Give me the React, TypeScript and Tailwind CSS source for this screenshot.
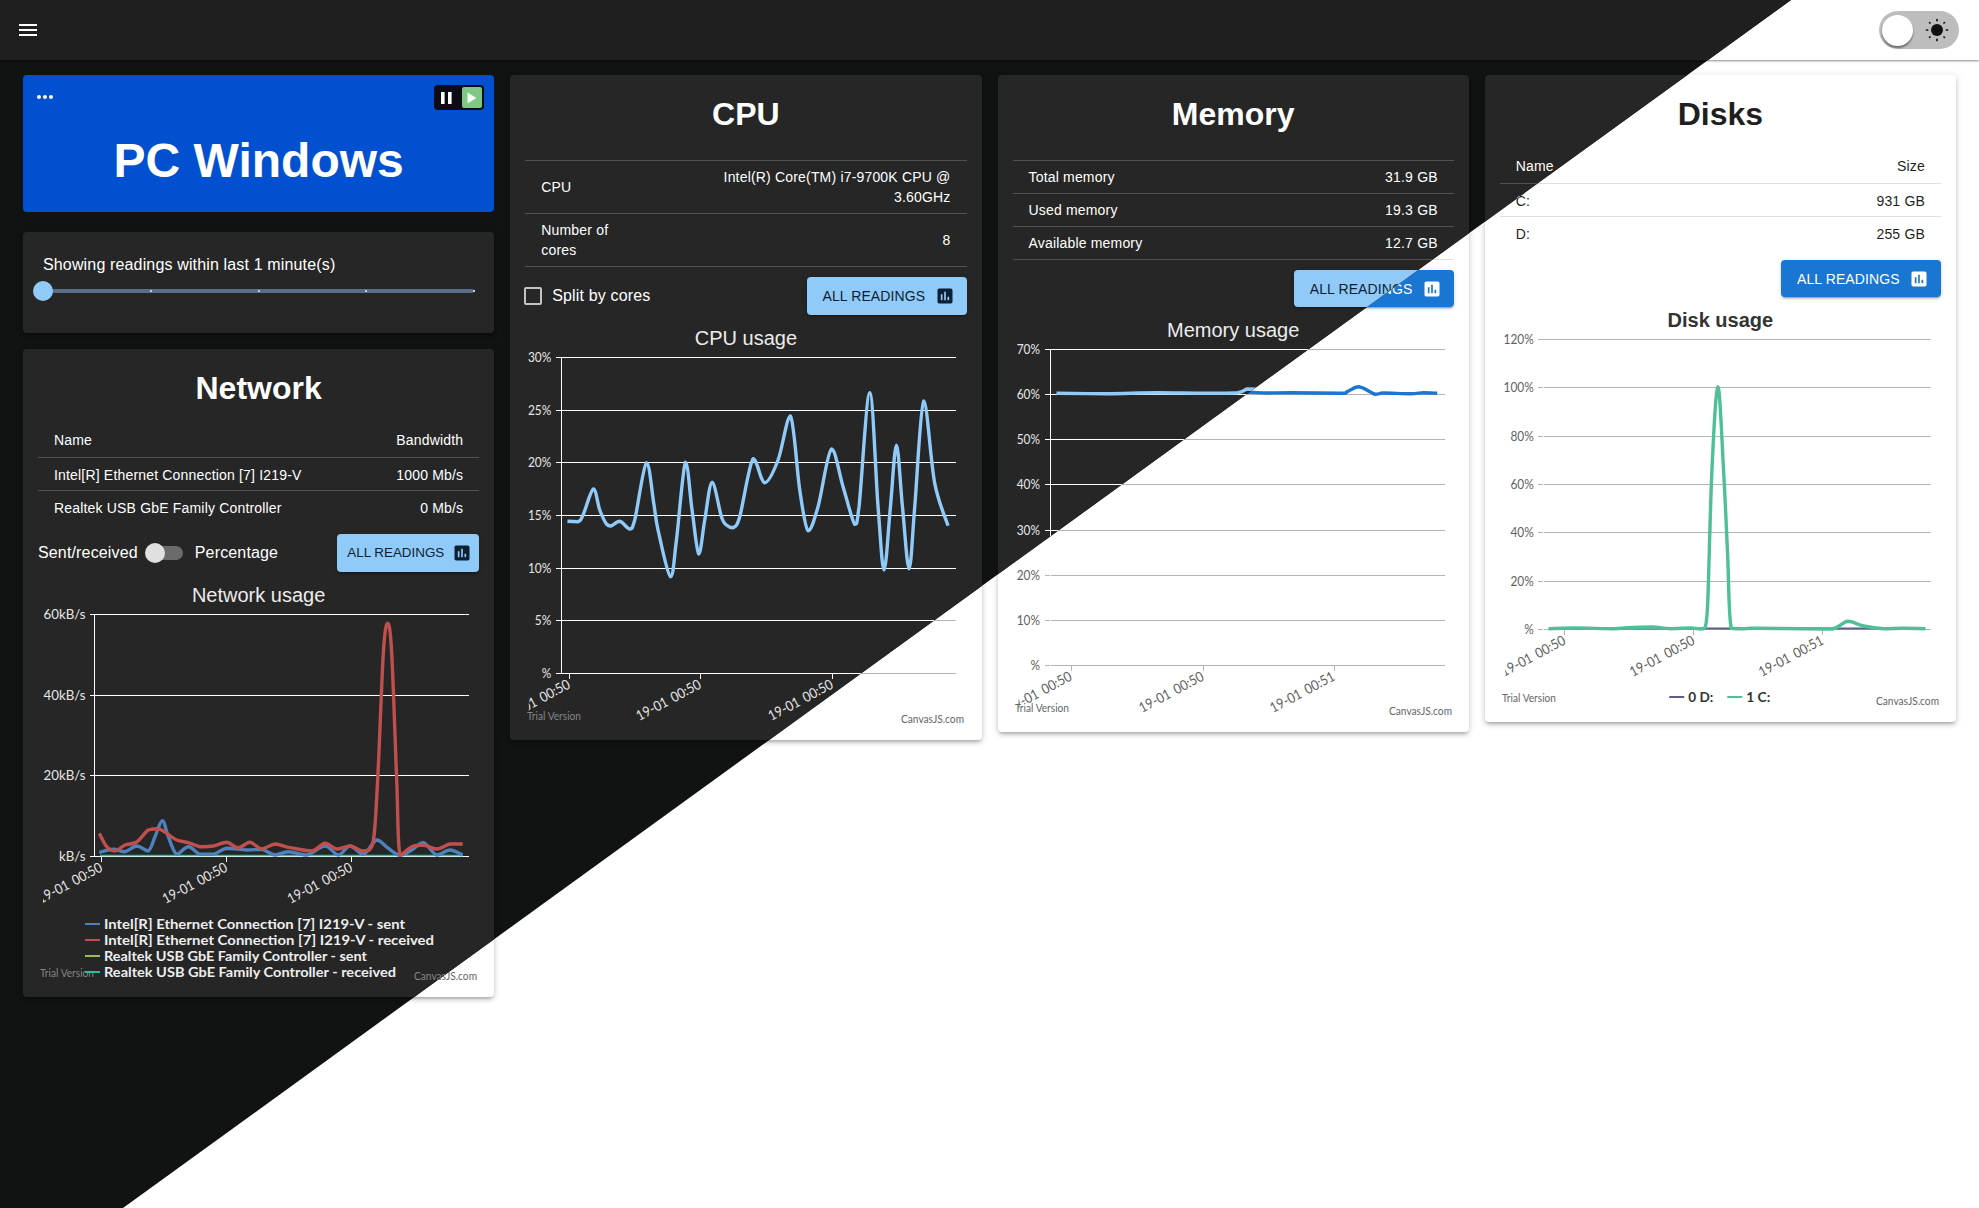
import React from "react";

type Mode = "dark" | "light";
type Pt = [number, number];

const themes = {
  dark: {
    page: "bg-[#111212]",
    bar: "bg-[#1f1f1f]",
    card: "bg-[#262626] text-white",
    line: "border-[#515151]",
    chartTitle: "text-[#ececec] font-normal",
    button: "bg-[#90caf9] text-[#0c1f33]",
    icon: "#0c1f33",
    rail: "bg-[#566e87]",
    thumb: "bg-[#90caf9]",
    tick: "bg-[#b7cde0]",
    track: "bg-[#6b6b6b]",
    knob: "bg-[#e0e0e0]",
    box: "border-[#c4c4c4]",
    menu: "#ffffff",
    grid: "#ffffff",
    axis: "#ffffff",
    label: "#e6e6e6",
    mark: "#858585",
    legend: "#eeeeee",
  },
  light: {
    page: "bg-white",
    bar: "bg-white",
    card: "bg-white text-[#1f1f1f]",
    line: "border-[#e0e0e0]",
    chartTitle: "text-[#333333] font-bold",
    button: "bg-[#1976d2] text-white",
    icon: "#ffffff",
    rail: "bg-[#a3c8ed]",
    thumb: "bg-[#1976d2]",
    tick: "bg-[#ffffff]",
    track: "bg-[#b0b0b0]",
    knob: "bg-[#ffffff]",
    box: "border-[#757575]",
    menu: "#333333",
    grid: "#b4b4b4",
    axis: "#ffffff",
    label: "#5f5f5f",
    mark: "#666666",
    legend: "#333333",
  },
};

function zoomed(ox: number, oy: number, pts: Pt[]): Pt[] {
  return pts.map(([x, y]) => [ox + x / 3, oy + y / 3]);
}

function clamp(v: number, a: number, b: number) {
  return Math.min(Math.max(a, b), Math.max(Math.min(a, b), v));
}

function spline(pts: Pt[]): string {
  let d = `M${pts[0][0].toFixed(1)} ${pts[0][1].toFixed(1)}`;
  for (let i = 0; i < pts.length - 1; i++) {
    const p0 = pts[Math.max(0, i - 1)];
    const p1 = pts[i];
    const p2 = pts[i + 1];
    const p3 = pts[Math.min(pts.length - 1, i + 2)];
    const c1x = p1[0] + (p2[0] - p0[0]) / 6;
    const c1y = clamp(p1[1] + (p2[1] - p0[1]) / 6, p1[1], p2[1]);
    const c2x = p2[0] - (p3[0] - p1[0]) / 6;
    const c2y = clamp(p2[1] - (p3[1] - p1[1]) / 6, p1[1], p2[1]);
    d += `C${c1x.toFixed(1)} ${c1y.toFixed(1)} ${c2x.toFixed(1)} ${c2y.toFixed(1)} ${p2[0].toFixed(1)} ${p2[1].toFixed(1)}`;
  }
  return d;
}

const networkRed = zoomed(0, 620, [
  [298, 640], [320, 680], [345, 693], [375, 675], [410, 666], [445, 630], [475, 626], [500, 640], [530, 660], [565, 668],
  [600, 680], [640, 678], [680, 667], [715, 683], [750, 667], [785, 687], [825, 672], [870, 683], [935, 693], [975, 670],
  [1010, 687], [1050, 678], [1085, 693], [1108, 690], [1123, 640], [1135, 440], [1150, 100], [1163, 10], [1175, 100], [1190, 480],
  [1200, 706], [1235, 680], [1270, 675], [1310, 687], [1350, 672], [1388, 672],
]);
const networkBlue = zoomed(0, 620, [
  [298, 697], [340, 688], [375, 695], [410, 678], [445, 693], [465, 650], [487, 602], [505, 650], [530, 703], [565, 680],
  [600, 703], [640, 703], [680, 685], [740, 690], [785, 688], [825, 705], [865, 695], [920, 705], [975, 678], [1015, 705],
  [1050, 678], [1090, 703], [1130, 660], [1165, 685], [1200, 706], [1235, 690], [1270, 668], [1310, 705], [1350, 690], [1388, 705],
]);
const cpuLine = zoomed(500, 340, [
  [203, 544], [235, 545], [250, 525], [281, 447], [300, 510], [320, 552], [333, 558], [360, 544], [390, 567], [405, 540],
  [440, 368], [462, 490], [475, 570], [512, 710], [530, 600], [557, 367], [577, 510], [597, 642], [615, 540], [637, 427],
  [665, 530], [680, 555], [700, 563], [720, 530], [760, 356], [795, 428], [835, 360], [872, 228], [900, 450], [925, 572],
  [955, 500], [995, 327], [1030, 440], [1065, 553], [1078, 500], [1110, 158], [1135, 500], [1153, 690], [1172, 500], [1190, 316],
  [1208, 500], [1228, 686], [1245, 500], [1272, 183], [1305, 430], [1345, 557],
]);
const memoryTail: Pt[] = [
  [830, 189], [900, 188], [1050, 190], [1070, 185], [1105, 170], [1155, 193], [1180, 189], [1260, 191], [1300, 188], [1340, 190],
];
const memoryDark = zoomed(990, 330, [
  [198, 190], [350, 191], [500, 188], [640, 190], [740, 188], [770, 177], [800, 178], ...memoryTail,
]);
const memoryLight = zoomed(990, 330, [
  [198, 190], [350, 191], [500, 188], [640, 190], [740, 188], [780, 187], ...memoryTail,
]);
const diskLine = zoomed(1470, 320, [
  [235, 926], [310, 924], [430, 926], [470, 923], [545, 921], [600, 926], [660, 924], [690, 927], [703, 925], [712, 860],
  [725, 450], [743, 200], [760, 450], [772, 700], [783, 925], [820, 926], [850, 925], [1000, 926], [1085, 927], [1133, 904],
  [1180, 918], [1240, 926], [1300, 925], [1365, 926],
]);

type Series = { d: string; color: string; width?: number };
type LegendItem = { label: string; color: string; x: number; y: number; len: number };

type ChartProps = {
  mode: Mode;
  ox: number;
  oy: number;
  gridStart: number;
  gridEnd: number;
  axisX: number;
  rows: { y: number; label: string }[];
  ticks: { x: number; label: string }[];
  clipX: number;
  series: Series[];
  legend?: LegendItem[];
  clipId: string;
  labelScale?: number;
};

const canvasFont = "Lato, 'Open Sans', sans-serif";

function Chart({ mode, ox, oy, gridStart, gridEnd, axisX, rows, ticks, clipX, series, legend, clipId, labelScale = 0.85 }: ChartProps) {
  const t = themes[mode];
  const bottom = rows[rows.length - 1].y;
  const id = `${clipId}-${mode}`;
  return (
    <svg viewBox={`${ox} ${oy} 471.25 390`} className="block w-full h-[390px]">
      <defs>
        <clipPath id={id}>
          <rect x={clipX} y={oy} width={471} height={390} />
        </clipPath>
      </defs>
      {rows.map((r) => (
        <line key={r.y} x1={gridStart} x2={gridEnd} y1={r.y} y2={r.y} stroke={t.grid} strokeWidth={1} shapeRendering="crispEdges" />
      ))}
      <line x1={axisX} x2={axisX} y1={rows[0].y} y2={bottom} stroke={t.axis} strokeWidth={1} shapeRendering="crispEdges" />
      {ticks.map((k) => (
        <line key={k.x} x1={k.x} x2={k.x} y1={bottom} y2={bottom + 5} stroke={mode === "dark" ? t.axis : t.grid} strokeWidth={1} shapeRendering="crispEdges" />
      ))}
      {rows.map((r) => (
        <text
          key={r.label}
          transform={`translate(${gridStart - 4.5} ${r.y + 4}) scale(${labelScale} 1)`}
          textAnchor="end"
          fontFamily={canvasFont}
          fontSize={14}
          fill={t.label}
        >
          {r.label}
        </text>
      ))}
      <g clipPath={`url(#${id})`}>
        {ticks.map((k) => (
          <text
            key={k.x}
            transform={`translate(${k.x + 2} ${bottom + 14}) rotate(-28) scale(0.9 1)`}
            textAnchor="end"
            fontFamily={canvasFont}
            fontSize={14}
            wordSpacing={2}
            fill={t.label}
          >
            {k.label}
          </text>
        ))}
      </g>
      {series.map((s, i) => (
        <path key={i} d={s.d} fill="none" stroke={s.color} strokeWidth={s.width ?? 3.4} strokeLinejoin="round" />
      ))}
      <text x={ox + 17} y={oy + 370} fontFamily={canvasFont} fontSize={12} fill={t.mark} textLength={54} lengthAdjust="spacingAndGlyphs">
        Trial Version
      </text>
      <text x={ox + 391} y={oy + 373} fontFamily={canvasFont} fontSize={12} fill={t.mark} textLength={63} lengthAdjust="spacingAndGlyphs">
        CanvasJS.com
      </text>
      {legend?.map((l) => (
        <g key={l.label}>
          <line x1={l.x} x2={l.x + 15} y1={l.y} y2={l.y} stroke={l.color} strokeWidth={2} />
          <text
            x={l.x + 19}
            y={l.y + 5}
            fontFamily={canvasFont}
            fontWeight={700}
            fontSize={14}
            fill={t.legend}
            textLength={l.len}
            lengthAdjust="spacingAndGlyphs"
          >
            {l.label}
          </text>
        </g>
      ))}
    </svg>
  );
}

function ChartIcon({ color }: { color: string }) {
  return (
    <svg viewBox="0 0 24 24" width={20} height={20} fill={color}>
      <path d="M19 3H5c-1.1 0-2 .9-2 2v14c0 1.1.9 2 2 2h14c1.1 0 2-.9 2-2V5c0-1.1-.9-2-2-2zM9 17H7v-7h2v7zm4 0h-2V7h2v10zm4 0h-2v-4h2v4z" />
    </svg>
  );
}

function ReadingsButton({ mode, compact, short }: { mode: Mode; compact?: boolean; short?: boolean }) {
  const t = themes[mode];
  return (
    <button
      className={`${t.button} ${compact ? "w-[142px] pl-[10px] pr-[7px] text-[13.4px]" : "w-[160px] pl-[16px] pr-[12px] text-sm tracking-[0.1px]"} ${short ? "h-[37px]" : "h-[38px]"} flex items-center justify-between rounded shadow-[0_3px_1px_-2px_rgba(0,0,0,0.2),0_2px_2px_0_rgba(0,0,0,0.14),0_1px_5px_0_rgba(0,0,0,0.12)]`}
    >
      <span>ALL READINGS</span>
      <ChartIcon color={t.icon} />
    </button>
  );
}

function Card({ mode, children, className = "" }: { mode: Mode; children: React.ReactNode; className?: string }) {
  const t = themes[mode];
  return (
    <section
      className={`${t.card} rounded shadow-[0_3px_3px_-2px_rgba(0,0,0,0.2),0_3px_4px_0_rgba(0,0,0,0.14),0_1px_8px_0_rgba(0,0,0,0.12)] ${className}`}
    >
      {children}
    </section>
  );
}

function CardTitle({ children, tall }: { children: React.ReactNode; tall?: boolean }) {
  return (
    <h2 className={`${tall ? "h-[85px]" : "h-[76px]"} pt-[20px] text-center text-[32px] leading-[38px] font-bold`}>{children}</h2>
  );
}

function Row({
  mode,
  left,
  right,
  last,
  place = "mid",
}: {
  mode: Mode;
  left: React.ReactNode;
  right: React.ReactNode;
  last?: boolean;
  place?: "mid" | "head" | "body";
}) {
  const t = themes[mode];
  const pad = place === "head" ? "pt-[5px] pb-[7px]" : place === "body" ? "pt-[7px] pb-[5px]" : "py-[6px]";
  return (
    <div className={`flex items-center justify-between px-4 ${pad} border-b text-sm leading-5 tracking-[0.18px] ${last ? "border-transparent" : t.line}`}>
      <span>{left}</span>
      <span className="text-right">{right}</span>
    </div>
  );
}

function ChartTitle({ mode, children }: { mode: Mode; children: React.ReactNode }) {
  return <h3 className={`mt-[11px] h-[24px] text-center text-xl leading-6 ${themes[mode].chartTitle}`}>{children}</h3>;
}

function Dashboard({ mode }: { mode: Mode }) {
  const t = themes[mode];
  const blue = mode === "dark" ? "#90caf9" : "#1976d2";
  return (
    <div className={`${t.page} h-[1208px] font-['Liberation_Sans',Arial,sans-serif]`}>
      <header
        className={`${t.bar} h-[60px] flex items-center justify-between pl-[16px] pr-[20px] shadow-[0_1px_2px_0_rgba(0,0,0,0.45)]`}
      >
        <svg viewBox="0 0 24 24" width={24} height={24} fill={t.menu}>
          <path d="M3 18h18v-2H3v2zm0-5h18v-2H3v2zm0-7v2h18V6H3z" />
        </svg>
        <div className="w-[80px] h-[38px] rounded-full bg-[#bdbdbd] flex items-center justify-between pl-[3px] pr-[10px]">
          <span className="block w-[31px] h-[31px] rounded-full bg-white shadow-[0_2px_2px_rgba(0,0,0,0.45)]" />
          <svg viewBox="0 0 24 24" width={24} height={24} fill="#111" stroke="#111">
            <circle cx={12} cy={12} r={6} stroke="none" />
            <g strokeWidth={1.7} strokeLinecap="round">
              <line x1={12} y1={1.5} x2={12} y2={2.6} />
              <line x1={12} y1={21.4} x2={12} y2={22.5} />
              <line x1={1.5} y1={12} x2={2.6} y2={12} />
              <line x1={21.4} y1={12} x2={22.5} y2={12} />
              <line x1={4.6} y1={4.6} x2={5} y2={5} />
              <line x1={19} y1={19} x2={19.4} y2={19.4} />
              <line x1={19.4} y1={4.6} x2={19} y2={5} />
              <line x1={5} y1={19} x2={4.6} y2={19.4} />
            </g>
          </svg>
        </div>
      </header>

      <main className="grid grid-cols-4 gap-x-4 px-[23px] pt-[15px] items-start">
        <div className="flex flex-col">
          <section className="h-[137px] rounded bg-[#0050d0] text-white px-[10px] pt-[10px]">
            <div className="h-[25px] flex justify-between items-start">
              <svg viewBox="0 0 24 24" width={24} height={24} fill="#fff">
                <path d="M6 10c-1.1 0-2 .9-2 2s.9 2 2 2 2-.9 2-2-.9-2-2-2zm12 0c-1.1 0-2 .9-2 2s.9 2 2 2 2-.9 2-2-.9-2-2-2zm-6 0c-1.1 0-2 .9-2 2s.9 2 2 2 2-.9 2-2-.9-2-2-2z" />
              </svg>
              <div className="w-[50px] h-[25px] rounded bg-[#0b0d12] flex items-center justify-between pl-[7px] pr-[2px]">
                <svg viewBox="0 0 11 12" width={11} height={12} fill="#fff">
                  <rect x={0} y={0} width={3.6} height={12} />
                  <rect x={7} y={0} width={3.6} height={12} />
                </svg>
                <span className="w-[20px] h-[21px] rounded-[2px] bg-[#7fc784] flex items-center justify-center">
                  <svg viewBox="0 0 10 12" width={10} height={12} fill="#f4fbf4">
                    <path d="M0.5 0.5 L9.5 6 L0.5 11.5 Z" />
                  </svg>
                </span>
              </div>
            </div>
            <h1 className="mt-[23px] text-center text-5xl leading-[56px] font-bold">PC Windows</h1>
          </section>

          <Card mode={mode} className="mt-[20px] h-[101px] px-[20px] pt-[21px]">
            <p className="text-base leading-6 tracking-[0.15px]">Showing readings within last 1 minute(s)</p>
            <div className={`${t.rail} relative mt-[12px] h-[4px] rounded-full`}>
              <span className={`${t.thumb} absolute left-[-10px] top-[-8px] w-[20px] h-[20px] rounded-full`} />
              <span className={`${t.tick} absolute left-[107px] top-[1px] w-[2px] h-[2px]`} />
              <span className={`${t.tick} absolute left-[215px] top-[1px] w-[2px] h-[2px]`} />
              <span className={`${t.tick} absolute left-[322px] top-[1px] w-[2px] h-[2px]`} />
              <span className={`${t.tick} absolute left-[430px] top-[1px] w-[2px] h-[2px]`} />
            </div>
          </Card>

          <Card mode={mode} className="mt-[16px]">
            <div className="px-[15px]">
              <CardTitle>Network</CardTitle>
              <Row mode={mode} left="Name" right="Bandwidth" place="head" />
              <Row mode={mode} left="Intel[R] Ethernet Connection [7] I219-V" right="1000 Mb/s" place="body" />
              <Row mode={mode} left="Realtek USB GbE Family Controller" right="0 Mb/s" place="body" last />
              <div className="mt-[10px] flex items-center justify-between">
                <div className="flex items-center text-base tracking-[0.15px]">
                  <span>Sent/received</span>
                  <span className={`${t.track} relative ml-[9px] mr-[12px] w-[36px] h-[14px] rounded-full`}>
                    <span className={`${t.knob} absolute left-[-2px] top-[-3px] w-[20px] h-[20px] rounded-full`} />
                  </span>
                  <span>Percentage</span>
                </div>
                <ReadingsButton mode={mode} compact />
              </div>
              <ChartTitle mode={mode}>Network usage</ChartTitle>
            </div>
            <Chart
              mode={mode}
              clipId="net"
              ox={23}
              oy={607}
              gridStart={90}
              gridEnd={469}
              axisX={94.5}
              clipX={43}
              labelScale={0.95}
              rows={[
                { y: 614.5, label: "60kB/s" },
                { y: 695.5, label: "40kB/s" },
                { y: 775.5, label: "20kB/s" },
                { y: 856.5, label: "kB/s" },
              ]}
              ticks={[
                { x: 101.5, label: "19-01 00:50" },
                { x: 226.5, label: "19-01 00:50" },
                { x: 351.5, label: "19-01 00:50" },
              ]}
              series={[
                { d: `M100 855.5H463`, color: "#23bfaa", width: 1.5 },
                { d: spline(networkBlue), color: "#4f81bc" },
                { d: spline(networkRed), color: "#c0504d" },
              ]}
              legend={[
                { label: "Intel[R] Ethernet Connection [7] I219-V - sent", color: "#4f81bc", x: 85, y: 924, len: 301 },
                { label: "Intel[R] Ethernet Connection [7] I219-V - received", color: "#c0504d", x: 85, y: 940, len: 330 },
                { label: "Realtek USB GbE Family Controller - sent", color: "#9bbb58", x: 85, y: 956, len: 263 },
                { label: "Realtek USB GbE Family Controller - received", color: "#23bfaa", x: 85, y: 972, len: 292 },
              ]}
            />
          </Card>
        </div>

        <Card mode={mode}>
          <div className="px-[15px]">
            <CardTitle tall>CPU</CardTitle>
            <div className={`border-t ${t.line}`}>
              <Row
                mode={mode}
                left="CPU"
                right={
                  <>
                    Intel(R) Core(TM) i7-9700K CPU @
                    <br />
                    3.60GHz
                  </>
                }
              />
              <Row
                mode={mode}
                left={
                  <>
                    Number of
                    <br />
                    cores
                  </>
                }
                right="8"
              />
            </div>
            <div className="mt-[10px] flex items-center justify-between">
              <div className="flex items-center text-base tracking-[0.15px]">
                <span className={`${t.box} ml-[-1px] w-[18px] h-[18px] rounded-[2px] border-2`} />
                <span className="ml-[10px]">Split by cores</span>
              </div>
              <ReadingsButton mode={mode} />
            </div>
            <ChartTitle mode={mode}>CPU usage</ChartTitle>
          </div>
          <Chart
            mode={mode}
            clipId="cpu"
            ox={510.25}
            oy={350}
            gridStart={556}
            gridEnd={956}
            axisX={561.5}
            clipX={529}
            rows={[
              { y: 357.5, label: "30%" },
              { y: 410.5, label: "25%" },
              { y: 462.5, label: "20%" },
              { y: 515.5, label: "15%" },
              { y: 568.5, label: "10%" },
              { y: 620.5, label: "5%" },
              { y: 673.5, label: "%" },
            ]}
            ticks={[
              { x: 569.5, label: "19-01 00:50" },
              { x: 700.5, label: "19-01 00:50" },
              { x: 832.5, label: "19-01 00:50" },
            ]}
            series={[{ d: spline(cpuLine), color: blue }]}
          />
        </Card>

        <Card mode={mode}>
          <div className="px-[15px]">
            <CardTitle tall>Memory</CardTitle>
            <div className={`border-t ${t.line}`}>
              <Row mode={mode} left="Total memory" right="31.9 GB" />
              <Row mode={mode} left="Used memory" right="19.3 GB" />
              <Row mode={mode} left="Available memory" right="12.7 GB" />
            </div>
            <div className="mt-[10px] flex justify-end">
              <ReadingsButton mode={mode} short />
            </div>
            <ChartTitle mode={mode}>Memory usage</ChartTitle>
          </div>
          <Chart
            mode={mode}
            clipId="mem"
            ox={997.5}
            oy={342}
            gridStart={1044}
            gridEnd={1444}
            axisX={1049.5}
            clipX={1018}
            rows={[
              { y: 349.5, label: "70%" },
              { y: 394.5, label: "60%" },
              { y: 439.5, label: "50%" },
              { y: 484.5, label: "40%" },
              { y: 530.5, label: "30%" },
              { y: 575.5, label: "20%" },
              { y: 620.5, label: "10%" },
              { y: 665.5, label: "%" },
            ]}
            ticks={[
              { x: 1070.5, label: "19-01 00:50" },
              { x: 1202.5, label: "19-01 00:50" },
              { x: 1333.5, label: "19-01 00:51" },
            ]}
            series={[{ d: spline(mode === "dark" ? memoryDark : memoryLight), color: blue }]}
          />
        </Card>

        <Card mode={mode}>
          <div className="px-[15px]">
            <CardTitle>Disks</CardTitle>
            <Row mode={mode} left="Name" right="Size" place="head" />
            <Row mode={mode} left="C:" right="931 GB" place="body" />
            <Row mode={mode} left="D:" right="255 GB" place="body" last />
            <div className="mt-[10px] flex justify-end">
              <ReadingsButton mode={mode} short />
            </div>
            <ChartTitle mode={mode}>Disk usage</ChartTitle>
          </div>
          <Chart
            mode={mode}
            clipId="disk"
            ox={1484.75}
            oy={332}
            gridStart={1538}
            gridEnd={1931}
            axisX={1543.5}
            clipX={1505}
            rows={[
              { y: 339.5, label: "120%" },
              { y: 387.5, label: "100%" },
              { y: 436.5, label: "80%" },
              { y: 484.5, label: "60%" },
              { y: 532.5, label: "40%" },
              { y: 581.5, label: "20%" },
              { y: 629.5, label: "%" },
            ]}
            ticks={[
              { x: 1564.5, label: "19-01 00:50" },
              { x: 1693.5, label: "19-01 00:50" },
              { x: 1822.5, label: "19-01 00:51" },
            ]}
            series={[
              { d: "M1549 628.5H1925", color: "#5b5f8e", width: 2 },
              { d: spline(diskLine), color: "#4fbf9a" },
            ]}
            legend={[
              { label: "0 D:", color: "#5b5f8e", x: 1669, y: 697, len: 25 },
              { label: "1 C:", color: "#4fbf9a", x: 1727, y: 697, len: 24 },
            ]}
          />
        </Card>
      </main>
    </div>
  );
}

export default function App() {
  return (
    <div className="relative w-full h-[1208px] overflow-hidden">
      <Dashboard mode="light" />
      <div className="absolute inset-0 [clip-path:polygon(0_0,1791px_0,123px_1208px,0_1208px)]">
        <Dashboard mode="dark" />
      </div>
    </div>
  );
}
